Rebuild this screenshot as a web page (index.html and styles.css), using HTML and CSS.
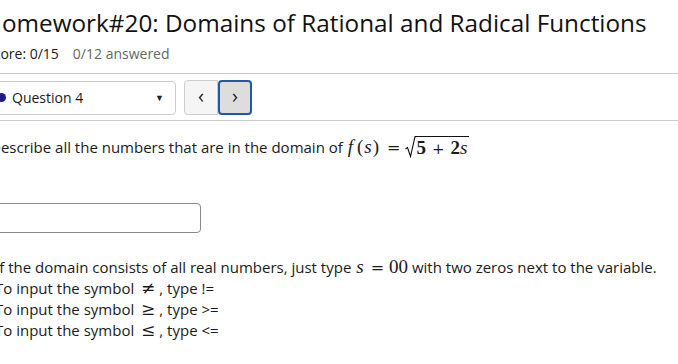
FILE: index.html
```html
<!DOCTYPE html>
<html lang="en">

<head>
    <meta charset="UTF-8">
    <meta name="viewport" content="width=device-width, initial-scale=1.0">
    <title>Homework#20</title>
    <link rel="stylesheet" href="styles.css">
</head>

<body>
    <div id="header">
        <h1>Homework#20: Domains of Rational and Radical Functions</h1>
        <div class="score">
            <span>Score: 0/15</span>
            <span class="answered">0/12 answered</span>
        </div>
    </div>

    <div class="nav-bar">
        <div class="question-select">
            <span class="dot"></span>
            <span class="q-label">Question 4</span>
            <span class="caret">&#9660;</span>
        </div>
        <div class="pager">
            <button class="pager-btn">&lsaquo;</button>
            <button class="pager-btn active">&rsaquo;</button>
        </div>
    </div>

    <div class="question">
        <p class="prompt">
            Describe all the numbers that are in the domain of
            <span class="math"><i class="fn">f</i><span class="paren">(</span><i>s</i><span class="paren">)</span><span class="op">=</span><span class="sqrt"><svg class="radical" width="11" height="22" viewBox="0 0 11 22"><path d="M0.5 13 L2.5 11.5 L5.5 20.5 L10 0.6 L11 0.6" fill="none" stroke="#111" stroke-width="1.1"/></svg><span class="radicand">5<span class="op small">+</span>2<i>s</i></span></span></span>
        </p>

        <input type="text" class="answer">

        <div class="hints">
            <p>If the domain consists of all real numbers, just type <span class="math"><i>s</i><span class="op">=</span>00</span> with two zeros next to the variable.</p>
            <p>To input the symbol <span class="sym">&ne;</span>, type !=</p>
            <p>To input the symbol <span class="sym">&ge;</span>, type &gt;=</p>
            <p>To input the symbol <span class="sym">&le;</span>, type &lt;=</p>
        </div>
    </div>
</body>

</html>
```

FILE: styles.css
```css
body {
    font-family: "Open Sans", Arial, sans-serif;
    margin: 0;
    padding: 0;
    background-color: #fff;
    color: #1a1a1a;
    overflow: hidden;
}

#header {
    margin-left: -16px;
    padding-top: 6px;
}

#header h1 {
    margin: 0;
    font-size: 24.3px;
    font-weight: 400;
    line-height: 34px;
    color: #111;
    white-space: nowrap;
}

.score {
    display: flex;
    gap: 14px;
    font-size: 14px;
    line-height: 20px;
    margin-top: 4px;
    padding-bottom: 9px;
    border-bottom: 1px solid #ccc;
    padding-left: 2px;
}

.score .answered {
    color: #666;
}

.nav-bar {
    display: flex;
    align-items: center;
    gap: 8px;
    padding: 6px 0 5px 0;
    margin-left: -20px;
    border-bottom: 1px solid #ccc;
}

.question-select {
    display: flex;
    align-items: center;
    height: 34px;
    width: 196px;
    padding: 0 10px 0 16px;
    border: 1px solid #ccc;
    border-radius: 4px;
    box-sizing: border-box;
    font-size: 14px;
}

.dot {
    width: 9px;
    height: 9px;
    border-radius: 50%;
    background-color: #1b1b8f;
    margin-right: 6px;
}

.q-label {
    flex: 1;
}

.caret {
    font-size: 9px;
    color: #222;
    margin-right: 1px;
}

.pager {
    display: flex;
}

.pager-btn {
    width: 34px;
    height: 35px;
    font-family: "Open Sans", Arial, sans-serif;
    font-size: 20px;
    line-height: 1;
    color: #222;
    background-color: #f5f5f5;
    border: 1px solid #ccc;
    border-radius: 4px 0 0 4px;
    padding: 0 0 3px 0;
}

.pager-btn.active {
    background-color: #ddd;
    border: 2px solid #1c5aa6;
    border-radius: 4px;
}

.question {
    margin-left: -10px;
}

.prompt {
    font-size: 15px;
    line-height: 22px;
    margin: 15px 0 0 0;
}

.math {
    font-family: "Liberation Serif", "DejaVu Serif", serif;
    font-size: 19px;
    white-space: nowrap;
    margin-left: 1px;
}

.math i {
    font-style: italic;
}

.math .fn {
    margin-right: 3px;
}

.paren {
    margin: 0 1px;
}

.op {
    font-family: "DejaVu Serif", serif;
    font-size: 16px;
    margin: 0 5px 0 7px;
}

.op.small {
    font-size: 15px;
    margin: 0 6px;
}

.sqrt {
    display: inline-flex;
    align-items: flex-start;
    vertical-align: -5px;
}

.radical {
    display: block;
}

.radicand {
    border-top: 1.2px solid #111;
    line-height: 21px;
    padding-right: 2px;
    font-weight: 600;
}

.radicand .op,
.radicand i {
    font-weight: 400;
}

.answer {
    display: block;
    width: 211px;
    height: 30px;
    margin: 43px 0 0 0;
    border: 1px solid #888;
    border-radius: 4px;
    box-sizing: border-box;
}

.hints {
    margin-top: 23px;
    margin-left: 5px;
    font-size: 15px;
    line-height: 21px;
}

.hints p {
    margin: 0;
}

.sym {
    font-family: "DejaVu Serif", serif;
    font-size: 17px;
    font-weight: 300;
    margin: 0 4px 0 3px;
}
```
